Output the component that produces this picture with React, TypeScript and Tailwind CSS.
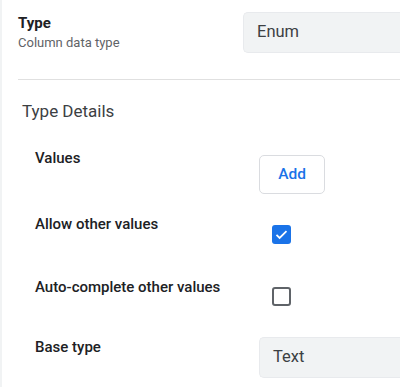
const Checkbox = ({ checked }: { checked: boolean }) =>
  checked ? (
    <div className="flex h-[19px] w-[19px] items-center justify-center rounded-[3px] bg-[#1a73e8]">
      <svg width="15" height="15" viewBox="0 0 24 24" fill="none">
        <path d="M4 12.5l5 5L20 6.5" stroke="white" strokeWidth="2.8" />
      </svg>
    </div>
  ) : (
    <div className="h-[19px] w-[19px] rounded-[3px] border-2 border-[#5f6368] bg-white" />
  )

export default function App() {
  return (
    <div
      className="h-[387px] w-[400px] overflow-hidden border-l-2 border-[#f1f3f4] bg-white text-[#202124]"
      style={{ fontFamily: "Roboto, 'Noto Sans', sans-serif" }}
    >
      <div className="ml-4 border-b border-[#e0e0e0] pb-[26px] pt-3">
        <div className="flex">
          <div className="w-[225px] pt-[1px]">
            <div className="text-[15px] font-bold leading-5">Type</div>
            <div className="text-[13px] leading-5 text-[#5f6368]">Column data type</div>
          </div>
          <div className="flex h-[41px] flex-1 items-center rounded-l-[5px] border border-r-0 border-[#e8eaed] bg-[#f1f3f4] pl-[13px] text-[16.5px] text-[#3c4043]">
            Enum
          </div>
        </div>
      </div>

      <div className="pl-5 pt-[19px] text-[17px] leading-6 text-[#3c4043]">Type Details</div>

      <div className="mt-[25px] pl-[33px]">
        <div className="flex h-[66px]">
          <div className="w-[224px] text-[15px] font-medium leading-5">Values</div>
          <div className="pt-[7px]">
            <button className="flex h-[39px] w-[66px] items-center justify-center rounded-[5px] border border-[#dadce0] bg-white text-[15.5px] font-medium text-[#1a73e8]">
              Add
            </button>
          </div>
        </div>

        <div className="flex h-[63px]">
          <div className="w-[237px] text-[15px] font-medium leading-5">Allow other values</div>
          <div className="pt-[11px]">
            <Checkbox checked />
          </div>
        </div>

        <div className="flex h-[60px]">
          <div className="w-[237px] text-[15px] font-medium leading-5">Auto-complete other values</div>
          <div className="pt-[10px]">
            <Checkbox checked={false} />
          </div>
        </div>

        <div className="flex">
          <div className="w-[224px] text-[15px] font-medium leading-5">Base type</div>
          <div className="flex h-[41px] flex-1 items-center rounded-l-[5px] border border-r-0 border-[#e8eaed] bg-[#f1f3f4] pl-[13px] text-[16.5px] text-[#3c4043]">
            Text
          </div>
        </div>
      </div>
    </div>
  )
}
